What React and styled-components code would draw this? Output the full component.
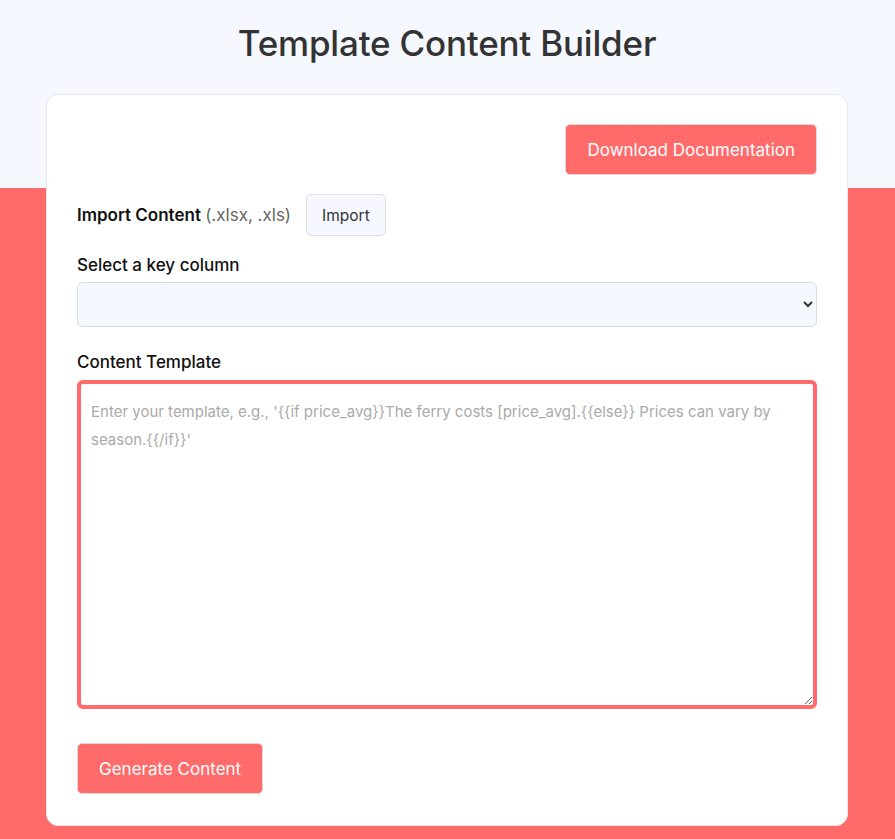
import React from "react";
import styled, { createGlobalStyle } from "styled-components";

const Global = createGlobalStyle`
  html, body { margin: 0; padding: 0; }
  body {
    font-family: Inter, "Noto Sans", sans-serif;
    background: linear-gradient(to bottom, #f5f8fe 0, #f5f8fe 188px, #ff6b6b 188px, #ff6b6b 100%);
    min-height: 839px;
  }
  * { box-sizing: border-box; }
`;

const Page = styled.div`
  padding: 0 47px 14px 46px;
  min-height: 839px;
`;

const Title = styled.h1`
  margin: 0;
  padding: 22px 0 30px;
  text-align: center;
  font-size: 35px;
  font-weight: 500;
  color: #333;
  line-height: 42px;
  letter-spacing: -0.2px;
`;

const Card = styled.div`
  background: #fff;
  border: 1px solid #e6e8ee;
  border-radius: 12px;
  padding: 29px 30px 31px;
  display: flex;
  flex-direction: column;
`;

const TopRow = styled.div`
  display: flex;
  justify-content: flex-end;
  margin-bottom: 19px;
`;

const PrimaryButton = styled.button`
  font-family: inherit;
  background: #ff6b6b;
  color: #fff;
  border: 1px solid #e3d6d6;
  border-radius: 5px;
  height: 51px;
  padding: 0 21px;
  font-size: 17px;
  font-weight: 400;
  cursor: pointer;
`;

const ImportRow = styled.div`
  display: flex;
  align-items: center;
  gap: 15px;
  margin-bottom: 20px;
`;

const Label = styled.label`
  font-size: 17px;
  line-height: 19px;
  font-weight: ${(p) => (p.$bold ? 600 : 500)};
  color: #111;
  display: block;
`;

const Hint = styled.span`
  font-weight: 400;
  color: #666;
`;

const SecondaryButton = styled.button`
  font-family: inherit;
  background: #f5f8fe;
  color: #333;
  border: 1px solid #dcdfe6;
  border-radius: 5px;
  height: 42px;
  padding: 0 15px;
  font-size: 15.5px;
  cursor: pointer;
`;

const Field = styled.div`
  display: flex;
  flex-direction: column;
  gap: ${(p) => p.$gap || 8}px;
  margin-bottom: ${(p) => p.$mb || 0}px;
`;

const Select = styled.select`
  font-family: inherit;
  width: 100%;
  height: 45px;
  background: #f5f8fe;
  border: 1px solid #d9dce3;
  border-radius: 6px;
  font-size: 15px;
  padding: 0 8px;
  color: #333;
`;

const TextArea = styled.textarea`
  font-family: inherit;
  width: 100%;
  height: 329px;
  flex-shrink: 0;
  border: 4px solid #ff6b6b;
  border-radius: 6px;
  padding: 14px 10px;
  font-size: 15px;
  line-height: 28px;
  color: #333;
  outline: none;
  resize: vertical;
  &::placeholder { color: #aaa; }
`;

export default function App() {
  return (
    <>
      <Global />
      <Page>
        <Title>Template Content Builder</Title>
        <Card>
          <TopRow>
            <PrimaryButton>Download Documentation</PrimaryButton>
          </TopRow>
          <ImportRow>
            <Label $bold>
              Import Content <Hint>(.xlsx, .xls)</Hint>
            </Label>
            <SecondaryButton>Import</SecondaryButton>
          </ImportRow>
          <Field $mb={26} $gap={7}>
            <Label>Select a key column</Label>
            <Select defaultValue="">
              <option value=""></option>
            </Select>
          </Field>
          <Field $mb={34} $gap={8}>
            <Label>Content Template</Label>
            <TextArea placeholder="Enter your template, e.g., '{{if price_avg}}The ferry costs [price_avg].{{else}} Prices can vary by season.{{/if}}'" />
          </Field>
          <div>
            <PrimaryButton>Generate Content</PrimaryButton>
          </div>
        </Card>
      </Page>
    </>
  );
}
